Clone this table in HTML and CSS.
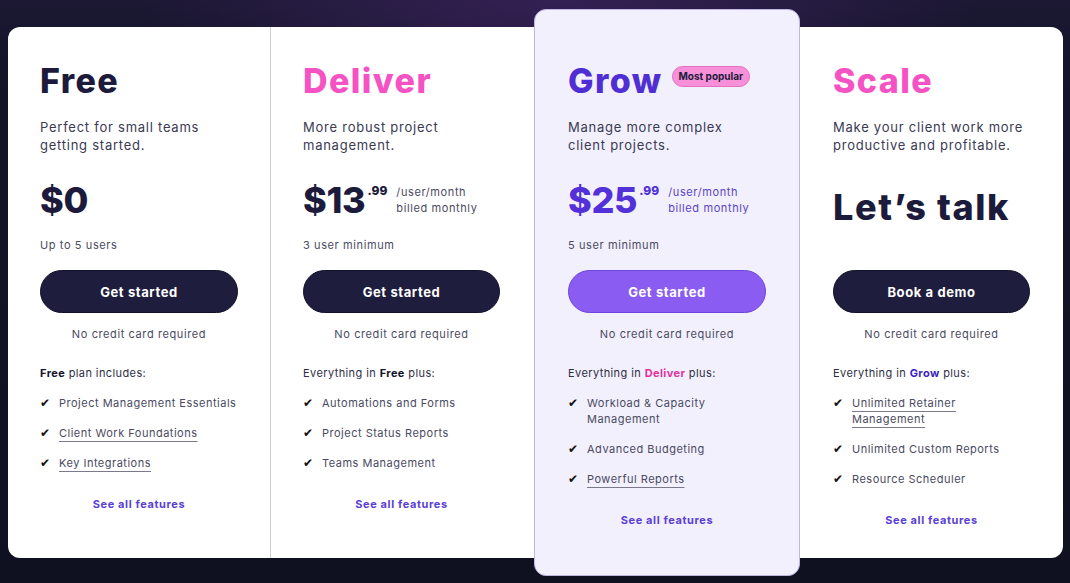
FILE: index.html
```html
<!DOCTYPE html>
<html lang="en">
<head>
<meta charset="utf-8">
<title>Pricing</title>
<link rel="stylesheet" href="styles.css">
</head>
<body>
<main class="pricing">
  <section class="plan plan-free">
    <h2 class="name name-dark">Free</h2>
    <p class="desc">Perfect for small teams<br>getting started.</p>
    <div class="price-area">
      <div class="price-row"><span class="amount">$0</span></div>
      <p class="note">Up to 5 users</p>
    </div>
    <a class="btn" href="#">Get started</a>
    <p class="nocc">No credit card required</p>
    <p class="incl"><b class="hl-dark">Free</b> plan includes:</p>
    <ul class="features">
      <li><span class="check">✔</span><span>Project Management Essentials</span></li>
      <li><span class="check">✔</span><span class="u">Client Work Foundations</span></li>
      <li><span class="check">✔</span><span class="u">Key Integrations</span></li>
    </ul>
    <a class="see" href="#">See all features</a>
  </section>

  <section class="plan plan-deliver">
    <h2 class="name name-pink">Deliver</h2>
    <p class="desc">More robust project<br>management.</p>
    <div class="price-area">
      <div class="price-row">
        <span class="amount">$13</span><span class="cents">.99</span>
        <span class="per">/user/month<br>billed monthly</span>
      </div>
      <p class="note">3 user minimum</p>
    </div>
    <a class="btn" href="#">Get started</a>
    <p class="nocc">No credit card required</p>
    <p class="incl">Everything in <b class="hl-dark">Free</b> plus:</p>
    <ul class="features">
      <li><span class="check">✔</span><span>Automations and Forms</span></li>
      <li><span class="check">✔</span><span>Project Status Reports</span></li>
      <li><span class="check">✔</span><span>Teams Management</span></li>
    </ul>
    <a class="see" href="#">See all features</a>
  </section>

  <section class="plan plan-grow">
    <div class="name-row">
      <h2 class="name name-purple">Grow</h2>
      <span class="badge">Most popular</span>
    </div>
    <p class="desc">Manage more complex<br>client projects.</p>
    <div class="price-area">
      <div class="price-row">
        <span class="amount">$25</span><span class="cents">.99</span>
        <span class="per">/user/month<br>billed monthly</span>
      </div>
      <p class="note">5 user minimum</p>
    </div>
    <a class="btn btn-purple" href="#">Get started</a>
    <p class="nocc">No credit card required</p>
    <p class="incl">Everything in <b class="hl-pink">Deliver</b> plus:</p>
    <ul class="features">
      <li><span class="check">✔</span><span>Workload &amp; Capacity<br>Management</span></li>
      <li><span class="check">✔</span><span>Advanced Budgeting</span></li>
      <li><span class="check">✔</span><span class="u">Powerful Reports</span></li>
    </ul>
    <a class="see" href="#">See all features</a>
  </section>

  <section class="plan plan-scale">
    <h2 class="name name-pink">Scale</h2>
    <p class="desc">Make your client work more<br>productive and profitable.</p>
    <div class="price-area">
      <p class="talk">Let’s talk</p>
    </div>
    <a class="btn" href="#">Book a demo</a>
    <p class="nocc">No credit card required</p>
    <p class="incl">Everything in <b class="hl-blue">Grow</b> plus:</p>
    <ul class="features">
      <li><span class="check">✔</span><span class="u">Unlimited Retainer</span></li>
      <li class="cont"><span class="check"></span><span class="u">Management</span></li>
      <li><span class="check">✔</span><span>Unlimited Custom Reports</span></li>
      <li><span class="check">✔</span><span>Resource Scheduler</span></li>
    </ul>
    <a class="see" href="#">See all features</a>
  </section>
</main>
</body>
</html>
```

FILE: styles.css
```css
* { box-sizing: border-box; }

html, body { height: 100%; }

body {
  margin: 0;
  padding: 27px 7px 0 8px;
  font-family: "Inter", "Liberation Sans", sans-serif;
  color: #3f3f58;
  background:
    radial-gradient(ellipse 420px 120px at 560px 0px, rgba(60, 35, 95, 0.75), rgba(60, 35, 95, 0) 100%),
    linear-gradient(180deg, #1c1833 0px, #15142a 60px, #0f1020 583px);
  overflow: hidden;
}

.pricing {
  display: grid;
  grid-template-columns: 263px 263px 266px 263px;
  background: #fff;
  border-radius: 12px;
  height: 531px;
}

.plan {
  display: flex;
  flex-direction: column;
  padding: 34px 33px 0 33px;
  min-width: 0;
}

.plan-free {
  padding-left: 32px;
  padding-right: 32px;
  border-right: 1px solid #cfcfd6;
}

.plan-deliver {
  padding-left: 32px;
  padding-right: 34px;
}

.plan-grow {
  margin: -18px 0;
  padding-top: 51px;
  background: #f2f0fd;
  border: 1px solid #bdb6e6;
  border-radius: 12px;
  position: relative;
  z-index: 1;
}

.name-row {
  display: flex;
  align-items: center;
  gap: 9px;
}

.name {
  margin: 0;
  font-size: 34px;
  line-height: 40px;
  font-weight: 800;
  letter-spacing: 1.4px;
}
.name-dark { color: #1c1b3c; }
.name-pink { color: #f552c3; }
.name-purple { color: #4f2fd3; }

.badge {
  display: inline-block;
  margin-top: -10px;
  padding: 0 6px;
  height: 21px;
  line-height: 19px;
  border-radius: 11px;
  background: #f790d9;
  border: 1px solid #e46fc5;
  color: #1c1b3c;
  font-size: 10px;
  font-weight: 700;
}

.desc {
  margin: 17px 0 0;
  font-size: 13px;
  line-height: 18px;
  letter-spacing: 0.75px;
  color: #3a3a52;
}

.price-area {
  height: 116px;
  display: flex;
  flex-direction: column;
}

.price-row {
  margin-top: 26px;
  height: 40px;
  display: flex;
  align-items: flex-start;
}

.amount {
  font-size: 36px;
  line-height: 40px;
  font-weight: 800;
  color: #1c1b3c;
  letter-spacing: -0.3px;
}

.cents {
  font-size: 12px;
  font-weight: 800;
  line-height: 14px;
  margin-top: 4px;
  margin-left: 2px;
  color: #1c1b3c;
}

.per {
  margin-left: 9px;
  margin-top: 4px;
  font-size: 11px;
  line-height: 16px;
  letter-spacing: 0.6px;
  color: #4a4a62;
}

.plan-grow .amount,
.plan-grow .cents { color: #5232d8; }
.plan-grow .per { color: #5a44c8; }

.note {
  margin: 17px 0 0;
  font-size: 11px;
  line-height: 16px;
  letter-spacing: 0.6px;
  color: #4a4a62;
}

.talk {
  margin: 31px 0 0;
  font-size: 36px;
  line-height: 44px;
  font-weight: 800;
  color: #1c1b3c;
  letter-spacing: 1.6px;
}

.btn {
  display: flex;
  align-items: center;
  justify-content: center;
  height: 43px;
  border-radius: 22px;
  background: #1f1d3d;
  border: 1px solid #11102a;
  color: #fff;
  font-size: 13px;
  font-weight: 700;
  letter-spacing: 0.6px;
  text-decoration: none;
}

.btn-purple {
  background: #8a5cf1;
  border-color: #6b45dc;
}

.nocc {
  margin: 13px 0 0;
  text-align: center;
  font-size: 11px;
  line-height: 16px;
  letter-spacing: 0.6px;
  color: #4a4a62;
}

.incl {
  margin: 23px 0 0;
  font-size: 11px;
  line-height: 16px;
  letter-spacing: 0.4px;
  color: #2e2e44;
}
.incl b { font-weight: 700; }
.hl-dark { color: #15142c; }
.hl-pink { color: #e0339f; }
.hl-blue { color: #3a22c4; }

.features {
  list-style: none;
  margin: 14px 0 0;
  padding: 0;
  display: flex;
  flex-direction: column;
  gap: 14px;
}

.features li {
  display: flex;
  align-items: flex-start;
  font-size: 11px;
  line-height: 16px;
  letter-spacing: 0.5px;
  color: #4a4a62;
}

.features li.cont { margin-top: -14px; }

.check {
  flex: 0 0 19px;
  font-family: "DejaVu Sans", sans-serif;
  font-size: 12px;
  line-height: 16px;
  color: #111;
}

.u {
  text-decoration: underline;
  text-decoration-color: #7a7a8c;
  text-underline-offset: 4px;
  text-decoration-thickness: 1px;
}

.see {
  margin-top: 25px;
  text-align: center;
  font-size: 11px;
  line-height: 16px;
  font-weight: 700;
  letter-spacing: 0.6px;
  color: #5a3fd6;
  text-decoration: none;
}
```
